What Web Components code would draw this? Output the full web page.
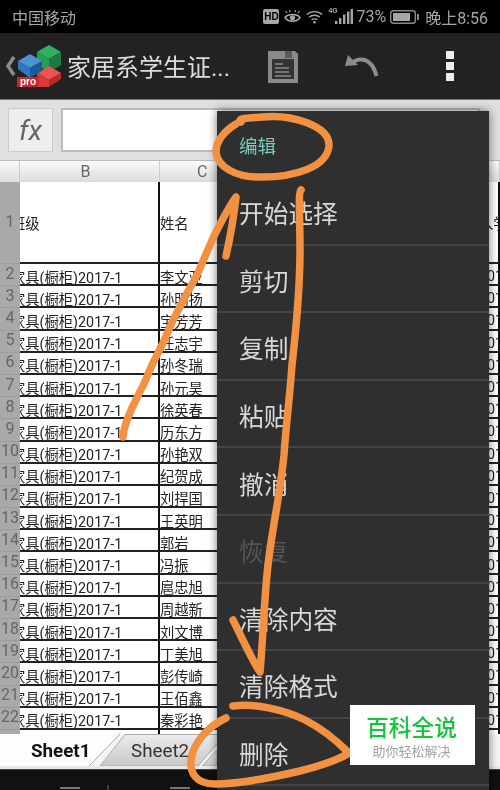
<!DOCTYPE html>
<html>
<head>
<meta charset="utf-8">
<style>
    html, body { margin: 0; padding: 0; background: #000; }
    body { width: 500px; height: 790px; overflow: hidden; }
</style>
</head>
<body>
<phone-screen>
    <status-bar></status-bar>
    <action-bar title="家居系学生证..."></action-bar>
    <formula-bar></formula-bar>
    <sheet-grid></sheet-grid>
    <sheet-tabs></sheet-tabs>
    <nav-strip></nav-strip>
    <edit-menu slot="over"></edit-menu>
    <pen-marks slot="over"></pen-marks>
    <water-mark slot="over"></water-mark>
</phone-screen>

<script>
const FONT = `Roboto, "Noto Sans CJK SC", sans-serif`;

class PhoneScreen extends HTMLElement {
    constructor(){
        super()
        this._shadowRoot = this.attachShadow({mode :'open'});
        this._shadowRoot.innerHTML = `
    <style>
        :host{
            display: flex;
            flex-direction: column;
            position: relative;
            width: 500px;
            height: 790px;
            overflow: hidden;
            font-family: ${FONT};
            filter: blur(0.35px);
        }
    </style>
    <slot></slot>
    <slot name="over"></slot>`
    }
}

class StatusBar extends HTMLElement {
    constructor(){
        super()
        this._shadowRoot = this.attachShadow({mode :'open'});
        this._shadowRoot.innerHTML = `
    <style>
        :host{
            display: flex;
            flex: none;
            height: 33px;
            align-items: center;
            justify-content: space-between;
            padding: 0 12px;
            background: #000;
            color: #a6a6a6;
            font-size: 16px;
        }
        .right{ display: flex; align-items: center; }
        svg{ display: block; flex: none; }
        .hd{
            width: 16px; height: 15px; border-radius: 2px; background: #a6a6a6; color: #000;
            font: bold 10px/15px "Liberation Sans", sans-serif; text-align: center;
        }
        .net{ position: relative; width: 25px; height: 17px; margin-left: 5px; }
        .net span{ position: absolute; left: 0; top: -1px; font: bold 7px/8px "Liberation Sans", sans-serif; color: #a6a6a6; }
    </style>
    <div>中国移动</div>
    <div class="right">
        <div class="hd">HD</div>
        <svg style="margin-left:5px" width="17" height="14" viewBox="0 0 17 14" fill="none" stroke="#a6a6a6">
            <path d="M1 7.5C4 3.5 13 3.5 16 7.5C13 12.5 4 12.5 1 7.5Z" stroke-width="1.5"/>
            <circle cx="8.5" cy="7.8" r="2.6" fill="#a6a6a6" stroke="none"/>
            <path d="M3 3L1.5 1M6 2L5.5 0M11 2L11.5 0M14 3L15.5 1" stroke-width="1.2"/>
        </svg>
        <svg style="margin-left:5px" width="17" height="14" viewBox="0 0 17 14" fill="none" stroke="#a6a6a6" stroke-width="1.4">
            <path d="M.8 4.6C5 .6 12 .6 16.2 4.6"/>
            <path d="M3.2 7.2C6 4.6 11 4.6 13.8 7.2"/>
            <path d="M5.6 9.8C7 8.5 10 8.5 11.4 9.8"/>
            <circle cx="8.5" cy="12.2" r="1.3" fill="#a6a6a6" stroke="none"/>
        </svg>
        <div class="net">
            <span>4G</span>
            <svg width="25" height="17" viewBox="0 0 25 17" fill="#a6a6a6">
                <rect x="7" y="13" width="2.4" height="3"/>
                <rect x="11" y="10" width="2.4" height="6"/>
                <rect x="15" y="6.5" width="2.4" height="9.5"/>
                <rect x="19" y="3.5" width="2.4" height="12.5"/>
                <rect x="22.6" y="1" width="2.4" height="15"/>
            </svg>
        </div>
        <div style="margin-left:3px">73%</div>
        <svg style="margin-left:4px" width="29" height="14" viewBox="0 0 29 14">
            <rect x=".7" y=".7" width="24.6" height="12.6" rx="2.5" fill="none" stroke="#8a8a8a" stroke-width="1.4"/>
            <rect x="3" y="3" width="17" height="8" fill="#a6a6a6"/>
            <rect x="27" y="4" width="2" height="6" fill="#8a8a8a"/>
        </svg>
        <div style="margin-left:6px">晚上8:56</div>
    </div>`
    }
}

class ActionBar extends HTMLElement {
    constructor(){
        super()
        this._shadowRoot = this.attachShadow({mode :'open'});
        this._shadowRoot.innerHTML = `
    <style>
        :host{
            display: flex;
            flex: none;
            box-sizing: border-box;
            height: 67px;
            align-items: center;
            padding-left: 6px;
            background: #222;
            border-bottom: 1px solid #777;
        }
        svg{ display: block; flex: none; }
        .title{ width: 201px; margin-left: 5px; padding-bottom: 2px; font-size: 24px; color: #ddd; white-space: nowrap; }
        .dots{ display: flex; flex-direction: column; gap: 3px; margin-left: 68px; }
        .dots i{ display: block; width: 8px; height: 8px; background: #eee; }
    </style>
    <svg width="10" height="20" viewBox="0 0 10 20"><path d="M8 1L2 10L8 19" fill="none" stroke="#8c8c8c" stroke-width="3.5"/></svg>
    <svg style="margin-left:1px" width="45" height="44" viewBox="0 0 45 44">
        <path d="M32 1L44 8L32 15L20 8Z" fill="#2fb163"/>
        <path d="M20 8L32 15V28L20 21Z" fill="#27a057"/>
        <path d="M44 8L32 15V28L44 21Z" fill="#1c7a42"/>
        <path d="M32 22L44 29L32 36L20 29Z" fill="#ef5350"/>
        <path d="M20 29L32 36V43H20Z" fill="#dc3a3a"/>
        <path d="M44 29L32 36V43L44 35Z" fill="#b82b2b"/>
        <path d="M13 10L25 17L13 24L1 17Z" fill="#4c93d4"/>
        <path d="M1 17L13 24V34L1 25Z" fill="#2f78c0"/>
        <path d="M25 17L13 24V34L25 27Z" fill="#1d5a9a"/>
        <rect x="0" y="33" width="22" height="10" fill="#c8282c"/>
        <text x="11" y="41" text-anchor="middle" font-family="'Liberation Sans',sans-serif" font-weight="bold" font-size="10" fill="#fff">pro</text>
    </svg>
    <div class="title">${this.getAttribute('title')}</div>
    <svg width="30" height="33" viewBox="0 0 30 33">
        <path d="M0 1H27L30 4V33H0Z" fill="#8a8a8a"/>
        <rect x="17" y="1" width="7" height="7" fill="#5a5a5a"/>
        <rect x="4" y="9" width="22" height="20" fill="#333"/>
        <path d="M7 14H15M7 18H21M7 22H21M7 26H23" stroke="#8a8a8a" stroke-width="1.6"/>
    </svg>
    <svg style="margin-left:47px" width="33" height="22" viewBox="0 0 33 22">
        <path d="M0 11L3 0L13 10Z" fill="#8c8c8c"/>
        <path d="M5 9C15 1 27 3 31.5 21" fill="none" stroke="#8c8c8c" stroke-width="4"/>
    </svg>
    <div class="dots"><i></i><i></i><i></i></div>`
    }
}

class FormulaBar extends HTMLElement {
    constructor(){
        super()
        this._shadowRoot = this.attachShadow({mode :'open'});
        this._shadowRoot.innerHTML = `
    <style>
        :host{
            display: flex;
            flex: none;
            box-sizing: border-box;
            height: 61px;
            padding: 8px 20px 8px 8px;
            gap: 8px;
            background: #e0e0e0;
            border-bottom: 1px solid #bbb;
        }
        .fx{
            box-sizing: border-box;
            width: 45px;
            display: flex; align-items: center; justify-content: center;
            background: #eee;
            border: 1px solid #ccc;
            color: #666;
            font: italic 400 28px Roboto, sans-serif;
        }
        .input{ flex: 1; background: #fff; border: 2px solid #bbb; }
    </style>
    <div class="fx">fx</div>
    <div class="input"></div>`
    }
}

const NAMES = ['李文亚','孙明扬','宝芳芳','任志宇','孙冬瑞','孙元昊','徐英春','历东方','孙艳双','纪贺成','刘捍国','王英明','郭岩','冯振','扈忠旭','周越新','刘文博','丁美旭','彭传崎','王佰鑫','秦彩艳'];

class SheetGrid extends HTMLElement {
    constructor(){
        super()
        this._shadowRoot = this.attachShadow({mode :'open'});
        let rows = NAMES.map((name, i) => this.row(i + 2, '家具(橱柜)2017-1', name, '2017')).join('');
        this._shadowRoot.innerHTML = `
    <style>
        :host{
            display: block;
            flex: none;
            height: 573px;
            overflow: hidden;
            background: #fff;
            color: #222;
            font-size: 14.3px;
        }
        .row{
            display: grid;
            grid-template-columns: 20px 140px 159px 159px 22px;
            height: 22.2px;
            box-sizing: border-box;
        }
        .row.first{ height: 82px; }
        .row.head{ height: 21px; background: linear-gradient(#fafafa, #dcdcdc); color: #666; font-size: 16px; }
        .row.head > div{ display: flex; align-items: center; padding: 0; border-right: 1px solid #ccc; border-bottom: 0; }
        .row.head > .letter-b{ justify-content: center; padding-right: 8px; }
        .row.head > .letter-c{ padding-left: 37px; }
        .row > div{
            box-sizing: border-box;
            display: flex;
            align-items: center;
            padding-top: 4px;
            overflow: hidden;
            white-space: nowrap;
            border-right: 2px solid #111;
            border-bottom: 2px solid #222;
        }
        .row.first > div{ padding-top: 0; }
        .row > .num{
            justify-content: center;
            padding: 0 0 3px;
            background: #a9a9a9;
            color: #666;
            font-size: 16px;
            border-right: 0;
            border-bottom: 1px solid #9c9c9c;
        }
        .row > .col-d{ border-right: 0; }
        .row > .b span{ margin-left: -9px; }
        .row > .e span{ margin-left: 1px; }
    </style>
    <div class="row head"><div></div><div class="letter-b">B</div><div class="letter-c">C</div><div></div><div></div></div>
    <div class="row first">
        <div class="num">1</div><div class="b"><span>班级</span></div><div>姓名</div><div class="col-d"></div><div class="e"><span>入学</span></div>
    </div>
    ${rows}
    ${this.row('', '', '', '')}`
    }
    row(num, cls, name, year){
        return `<div class="row"><div class="num">${num}</div><div class="b"><span>${cls}</span></div><div>${name}</div><div class="col-d"></div><div class="e"><span>${year}</span></div></div>`
    }
}

class SheetTabs extends HTMLElement {
    constructor(){
        super()
        this._shadowRoot = this.attachShadow({mode :'open'});
        this._shadowRoot.innerHTML = `
    <style>
        :host{
            display: block;
            flex: none;
            position: relative;
            height: 36px;
            background: #d4d4d4;
            font-family: Roboto, "Liberation Sans", sans-serif;
            font-size: 18.8px;
            color: #333;
        }
        svg{ position: absolute; left: 0; top: 0; }
        .tabs{ position: relative; display: flex; height: 34px; align-items: center; }
        .one{ margin-left: 31px; width: 100px; font-weight: bold; color: #111; }
    </style>
    <svg width="500" height="36" viewBox="0 0 500 36">
        <defs>
            <linearGradient id="g" x1="0" y1="0" x2="0" y2="1"><stop offset="0" stop-color="#ececec"/><stop offset="1" stop-color="#c8c8c8"/></linearGradient>
        </defs>
        <rect width="500" height="36" fill="#f4f4f4"/>
        <path d="M202 32L217 16V32Z" fill="url(#g)" stroke="#aaa"/>
        <path d="M100 32L125 .5H225L198 32Z" fill="url(#g)" stroke="#aaa"/>
        <path d="M0 0H120L89 32H0Z" fill="#fdfdfd"/>
        <path d="M89 32L120 0" fill="none" stroke="#aaa"/>
        <rect y="32" width="500" height="4" fill="#e8e8e8"/>
        <rect y="35" width="500" height="1" fill="#444"/>
    </svg>
    <div class="tabs"><div class="one">Sheet1</div><div>Sheet2</div></div>`
    }
}

class NavStrip extends HTMLElement {
    constructor(){
        super()
        this._shadowRoot = this.attachShadow({mode :'open'});
        this._shadowRoot.innerHTML = `
    <style>
        :host{ display: block; flex: 1; position: relative; background: #111; }
        svg{ display: block; }
    </style>
    <svg width="500" height="20" viewBox="0 0 500 20">
        <path d="M60 18H80M170 18H190" stroke="#999" stroke-width="1.5"/>
        <path d="M108 15V20" stroke="#666"/>
    </svg>`
    }
}

class MenuItem extends HTMLElement {
    constructor(){
        super()
        this._shadowRoot = this.attachShadow({mode :'open'});
        this._shadowRoot.innerHTML = `
    <style>
        :host{
            display: flex;
            box-sizing: border-box;
            height: 67.6px;
            align-items: center;
            padding-left: 22px;
            padding-top: 3px;
            font-size: 24.7px;
            color: #d8d8d8;
            border-bottom: 2px solid #444;
        }
        :host([disabled]){ color: #555; }
        :host([heading]){ font-size: 18.5px; color: #7ccabf; border-bottom: 0; height: 67px; padding-top: 1px; }
    </style>
    <slot></slot>`
    }
}

class EditMenu extends HTMLElement {
    constructor(){
        super()
        this._shadowRoot = this.attachShadow({mode :'open'});
        this._shadowRoot.innerHTML = `
    <style>
        :host{
            display: block;
            position: absolute;
            left: 217px;
            top: 111px;
            width: 272px;
            height: 690px;
            background: #2f2f2f;
            box-shadow: 0 0 9px rgba(0,0,0,.55);
        }
    </style>
    <menu-item heading>编辑</menu-item>
    <menu-item>开始选择</menu-item>
    <menu-item>剪切</menu-item>
    <menu-item>复制</menu-item>
    <menu-item>粘贴</menu-item>
    <menu-item>撤消</menu-item>
    <menu-item disabled>恢复</menu-item>
    <menu-item>清除内容</menu-item>
    <menu-item>清除格式</menu-item>
    <menu-item>删除</menu-item>`
    }
}

class PenMarks extends HTMLElement {
    constructor(){
        super()
        this._shadowRoot = this.attachShadow({mode :'open'});
        this._shadowRoot.innerHTML = `
    <style>
        :host{ display: block; position: absolute; left: 0; top: 0; width: 500px; height: 790px; pointer-events: none; }
    </style>
    <svg width="500" height="790" viewBox="0 0 500 790" fill="none" stroke="#f39143" stroke-width="7.5" stroke-linecap="round" stroke-linejoin="round">
        <path d="M241 122C236 118 250 118 262 117C290 114 330 125 329 146C327 167 295 177 262 177C235 178 217 166 216 152C216 140 226 130 236 124"/>
        <path d="M123 437C124 425 128 417 132 408C136 400 139 393 143 386L152 365L163 343L173 320L185 297L197 275L213 238C222 220 230 205 236 197C234 215 230 238 226 256"/>
        <path d="M301 190C298 193 300 215 300 250C300 290 296 330 292 365C290 395 286 425 284 455C280 495 272 530 268 565C264 600 263 640 260 672C252 660 243 640 233 620"/>
        <path d="M233 706C255 703 285 710 305 720C325 730 340 744 349 753C338 760 320 766 300 771C270 778 240 784 215 784C195 784 190 772 191 760C193 745 205 728 226 718"/>
    </svg>`
    }
}

class WaterMark extends HTMLElement {
    constructor(){
        super()
        this._shadowRoot = this.attachShadow({mode :'open'});
        this._shadowRoot.innerHTML = `
    <style>
        :host{
            display: flex;
            flex-direction: column;
            align-items: center;
            position: absolute;
            left: 350px;
            top: 705px;
            width: 125px;
            height: 60px;
            padding-top: 11px;
            padding-right: 2px;
            box-sizing: border-box;
            background: #fff;
        }
        .big{ font-size: 22.7px; line-height: 26px; font-weight: 500; color: #12c63c; }
        .small{ font-size: 13px; line-height: 19px; color: #a2a2a2; }
    </style>
    <div class="big">百科全说</div>
    <div class="small">助你轻松解决</div>`
    }
}

window.customElements.define('phone-screen', PhoneScreen);
window.customElements.define('status-bar', StatusBar);
window.customElements.define('action-bar', ActionBar);
window.customElements.define('formula-bar', FormulaBar);
window.customElements.define('sheet-grid', SheetGrid);
window.customElements.define('sheet-tabs', SheetTabs);
window.customElements.define('nav-strip', NavStrip);
window.customElements.define('menu-item', MenuItem);
window.customElements.define('edit-menu', EditMenu);
window.customElements.define('pen-marks', PenMarks);
window.customElements.define('water-mark', WaterMark);
</script>
</body>
</html>
